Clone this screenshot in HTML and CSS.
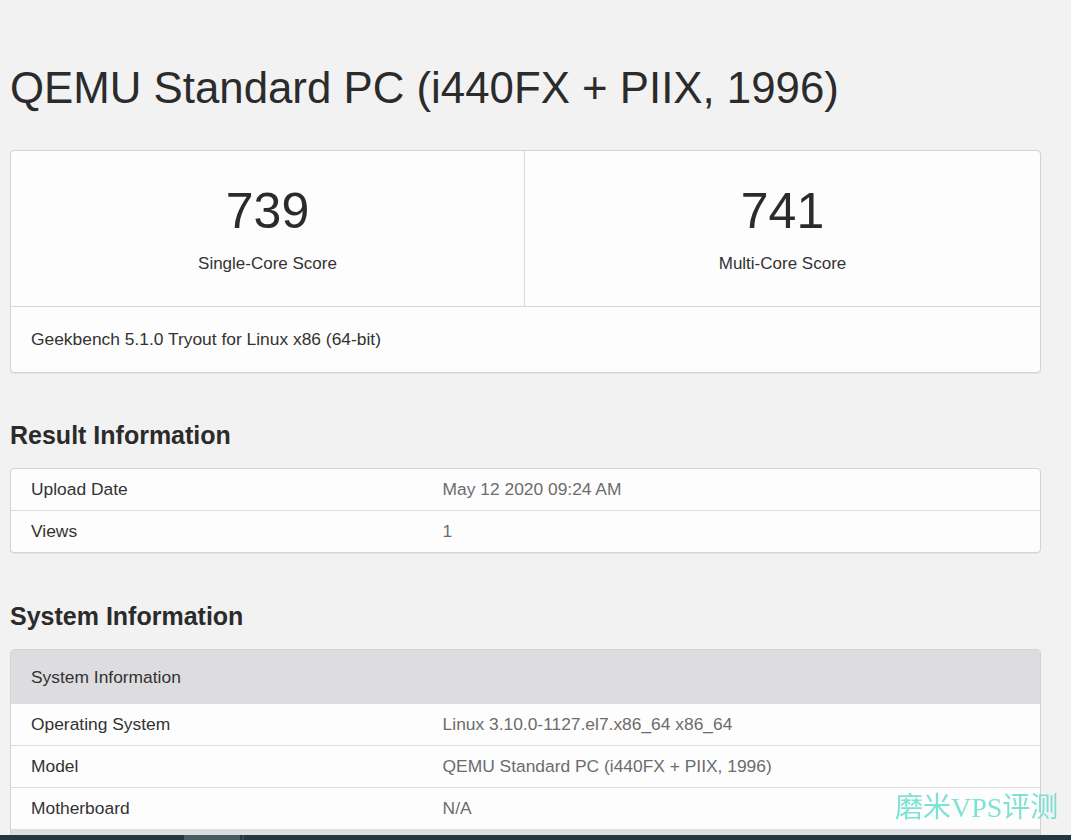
FILE: index.html
```html
<!DOCTYPE html>
<html lang="en">
<head>
<meta charset="utf-8">
<title>QEMU Standard PC (i440FX + PIIX, 1996) - Geekbench</title>
<link rel="stylesheet" href="styles.css">
</head>
<body>
<main class="page">
  <h1 class="title">QEMU Standard PC (i440FX + PIIX, 1996)</h1>

  <section class="card scores">
    <div class="score-grid">
      <div class="score">
        <div class="score-num">739</div>
        <div class="score-label">Single-Core Score</div>
      </div>
      <div class="score">
        <div class="score-num">741</div>
        <div class="score-label">Multi-Core Score</div>
      </div>
    </div>
    <div class="score-foot">Geekbench 5.1.0 Tryout for Linux x86 (64-bit)</div>
  </section>

  <h2 class="section-title">Result Information</h2>
  <section class="card">
    <div class="row"><div class="key">Upload Date</div><div class="val">May 12 2020 09:24 AM</div></div>
    <div class="row"><div class="key">Views</div><div class="val">1</div></div>
  </section>

  <h2 class="section-title sys-title">System Information</h2>
  <section class="card">
    <div class="row head"><div class="key">System Information</div></div>
    <div class="row"><div class="key">Operating System</div><div class="val">Linux 3.10.0-1127.el7.x86_64 x86_64</div></div>
    <div class="row"><div class="key">Model</div><div class="val">QEMU Standard PC (i440FX + PIIX, 1996)</div></div>
    <div class="row"><div class="key">Motherboard</div><div class="val">N/A</div></div>
    <div class="row head spacer"></div>
  </section>
</main>

<div class="watermark">磨米VPS评测</div>
<div class="taskbar"><span class="task-active"></span><span class="task-sep"></span></div>
</body>
</html>
```

FILE: styles.css
```css
html, body {
  margin: 0;
  padding: 0;
}
body {
  background: #f2f2f2;
  color: #333;
  font-family: "Liberation Sans", Arial, sans-serif;
  font-size: 17.4px;
  line-height: 25px;
  height: 840px;
  overflow: hidden;
}
.page {
  width: 1031px;
  margin-left: 10px;
}
.title {
  font-size: 43.8px;
  font-weight: normal;
  line-height: 53px;
  margin: 61px 0 36px;
  color: #2b2b2b;
}
.card {
  background: #fdfdfd;
  border: 1px solid #d3d3d3;
  border-radius: 4px;
  box-shadow: 0 1px 1px rgba(0,0,0,0.05);
  overflow: hidden;
}
.score-grid {
  display: grid;
  grid-template-columns: 513px 1fr;
}
.score {
  text-align: center;
  padding: 30px 0;
}
.score + .score {
  border-left: 1px solid #d8d8d8;
}
.score-num {
  font-size: 50px;
  line-height: 60px;
  color: #2b2b2b;
}
.score-label {
  margin-top: 10px;
  line-height: 25px;
  font-size: 17px;
}
.score-foot {
  border-top: 1px solid #d8d8d8;
  padding: 20px 20px;
}
.section-title {
  font-size: 25px;
  font-weight: bold;
  line-height: 30px;
  margin: 47px 0 18px;
  color: #2b2b2b;
}
.sys-title {
  margin-top: 48px;
}
.row {
  display: grid;
  grid-template-columns: 40% 60%;
  padding: 8px 0;
  border-top: 1px solid #dcdcdc;
}
.row:first-child {
  border-top: none;
}
.key {
  padding-left: 20px;
}
.val {
  padding-left: 20px;
  color: #6c6c6c;
}
.row.head {
  background: #dddddf;
  padding: 15px 0 14px;
  border-top: none;
}
.row.head + .row {
  border-top: none;
}
.row.spacer {
  height: 30px;
  padding: 0;
}
.watermark {
  position: fixed;
  left: 895px;
  top: 792px;
  font-family: "Liberation Serif", "Noto Sans CJK SC", serif;
  font-size: 28px;
  line-height: 32px;
  color: rgba(80, 218, 198, 0.75);
  white-space: nowrap;
}
.taskbar {
  position: fixed;
  left: 0;
  right: 0;
  bottom: 0;
  height: 5px;
  background: #243640;
  display: flex;
}
.task-active {
  margin-left: 184px;
  width: 56px;
  background: #4a5a61;
}
.task-sep {
  margin-left: 2px;
  width: 2px;
  background: #3a4a52;
}
```
